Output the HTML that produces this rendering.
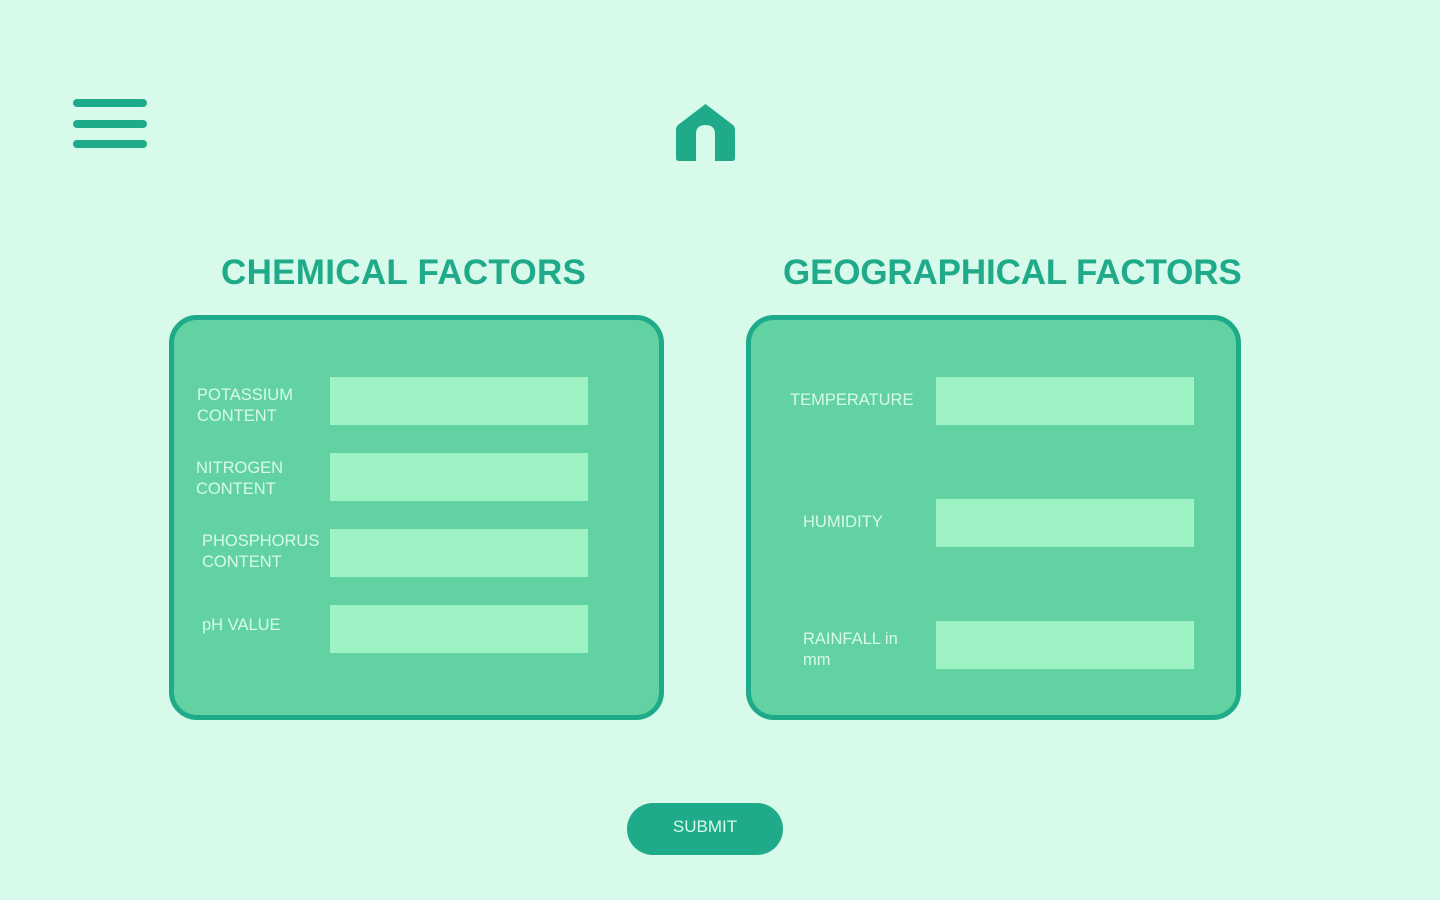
<!DOCTYPE html>
<html><head><style>
body{margin:0;width:1440px;height:900px;background:#d7faea;position:relative;overflow:hidden;font-family:"Liberation Sans",sans-serif}
.bar{position:absolute;left:73px;width:74px;height:8px;border-radius:4px;background:#1fab89}
.h{position:absolute;top:253px;font-weight:bold;font-size:35px;color:#1fab89;white-space:nowrap;letter-spacing:-0.3px}
.panel{position:absolute;top:315px;width:485px;height:395px;border:5px solid #1fab89;border-radius:28px;background:#62d2a2}
.in{position:absolute;width:258px;height:48px;background:#9df3c4}
.l{position:absolute;color:#d7faea;font-size:16.5px;line-height:21px}
.btn{position:absolute;left:627px;top:803px;width:156px;height:52px;border-radius:26px;background:#1fab89;color:#d7faea;font-size:17px;text-align:center;line-height:48px}
</style></head><body>
<div class="bar" style="top:99px"></div>
<div class="bar" style="top:120px"></div>
<div class="bar" style="top:140px"></div>
<svg style="position:absolute;left:676px;top:104px" width="59" height="58" viewBox="0 0 59 58"><path d="M29.5 0 L57 21 Q59 23 59 26 V54 Q59 57 56 57 H39 V30 Q39 21 29.5 21 Q20 21 20 30 V57 H3 Q0 57 0 54 V26 Q0 23 2 21 Z" fill="#1fab89"/><path d="M24 57 V37 Q24 32 29.5 32 Q35 32 35 37 V57Z" fill="#d7faea"/></svg>
<div class="h" style="left:221px;letter-spacing:0.3px">CHEMICAL FACTORS</div>
<div class="h" style="left:783px;letter-spacing:-0.15px">GEOGRAPHICAL FACTORS</div>
<div class="panel" style="left:169px"></div>
<div class="panel" style="left:746px"></div>
<div class="in" style="left:330px;top:377px"></div>
<div class="in" style="left:330px;top:453px"></div>
<div class="in" style="left:330px;top:529px"></div>
<div class="in" style="left:330px;top:605px"></div>
<div class="in" style="left:936px;top:377px"></div>
<div class="in" style="left:936px;top:499px"></div>
<div class="in" style="left:936px;top:621px"></div>
<div class="l" style="left:197px;top:385px">POTASSIUM<br>CONTENT</div>
<div class="l" style="left:196px;top:458px">NITROGEN<br>CONTENT</div>
<div class="l" style="left:202px;top:531px">PHOSPHORUS<br>CONTENT</div>
<div class="l" style="left:202px;top:615px">pH VALUE</div>
<div class="l" style="left:790px;top:390px">TEMPERATURE</div>
<div class="l" style="left:803px;top:512px">HUMIDITY</div>
<div class="l" style="left:803px;top:629px">RAINFALL in<br>mm</div>
<div class="btn">SUBMIT</div>
</body></html>
